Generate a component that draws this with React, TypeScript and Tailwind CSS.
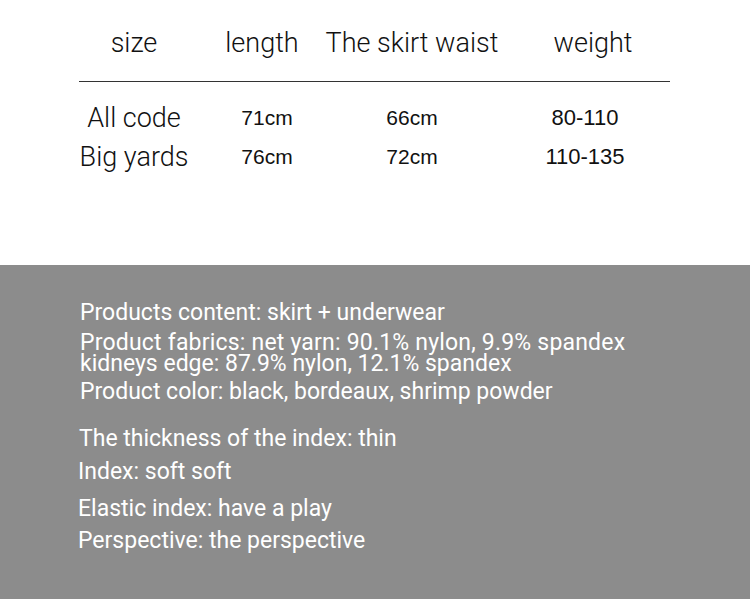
const head = [
  { label: "size", w: "w-[132px]" },
  { label: "length", w: "w-[124px]" },
  { label: "The skirt waist", w: "w-[176px]" },
  { label: "weight", w: "w-[186px]" },
];

const rows = [
  ["All code", "71cm", "66cm", "80-110"],
  ["Big yards", "76cm", "72cm", "110-135"],
];

const specsA = [
  { text: "Products content: skirt + underwear", mt: "mt-0" },
  { text: "Product fabrics: net yarn: 90.1% nylon, 9.9% spandex", mt: "mt-[9px] tracking-[0.2px]" },
  { text: "kidneys edge: 87.9% nylon, 12.1% spandex", mt: "mt-0" },
  { text: "Product color: black, bordeaux, shrimp powder", mt: "mt-[7px]" },
];

const specsB = [
  { text: "The thickness of the index: thin", mt: "mt-[26px] pl-[1px]" },
  { text: "Index: soft soft", mt: "mt-[12px]" },
  { text: "Elastic index: have a play", mt: "mt-[16px]" },
  { text: "Perspective: the perspective", mt: "mt-[11px]" },
];

export default function App() {
  return (
    <div className="flex h-[599px] w-[750px] flex-col bg-white font-['Roboto',sans-serif]">
      <section className="h-[265px] bg-white">
        <div className="flex pl-[68px] pt-[27px] text-[27px] leading-[32px] font-light text-[#111]">
          {head.map((h) => (
            <div key={h.label} className={`${h.w} text-center`}>
              {h.label}
            </div>
          ))}
        </div>
        <div className="mx-[79px] mt-[22px] h-px w-[591px] bg-[#333]" />
        <div className="mt-[22px] flex flex-col gap-[11px] pl-[68px]">
          {rows.map((r) => (
            <div key={r[0]} className="flex items-center leading-[28px] text-[#111]">
              <div className="w-[132px] text-center text-[27px] font-light">{r[0]}</div>
              <div className="w-[124px] pl-[10px] text-center font-['Liberation_Sans',sans-serif] text-[21px]">
                {r[1]}
              </div>
              <div className="w-[176px] text-center font-['Liberation_Sans',sans-serif] text-[21px]">
                {r[2]}
              </div>
              <div className="w-[186px] pr-[16px] text-center font-['Liberation_Sans',sans-serif] text-[22px]">
                {r[3]}
              </div>
            </div>
          ))}
        </div>
      </section>
      <section className="flex flex-1 flex-col bg-[#8c8c8c] pt-[37px] pl-[80px] text-[23px] leading-[21px] text-white">
        {specsA.map((s) => (
          <p key={s.text} className={s.mt}>
            {s.text}
          </p>
        ))}
        <div className="-ml-[2px] flex flex-col">
          {specsB.map((s) => (
            <p key={s.text} className={s.mt}>
              {s.text}
            </p>
          ))}
        </div>
      </section>
    </div>
  );
}
